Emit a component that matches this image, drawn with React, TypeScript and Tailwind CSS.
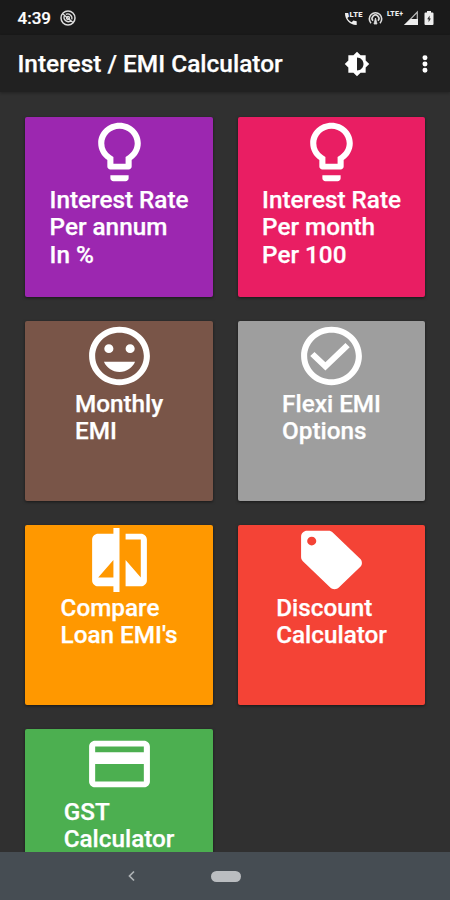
import clsx from "clsx";

interface CardProps {
  lines: string[];
  color: string;
  icon: string;
}

const bulb =
  "M9 21c0 .55.45 1 1 1h4c.55 0 1-.45 1-1v-1H9v1zm3-19C8.14 2 5 5.14 5 9c0 2.38 1.19 4.47 3 5.74V17c0 .55.45 1 1 1h6c.55 0 1-.45 1-1v-2.26c1.81-1.27 3-3.36 3-5.74 0-3.86-3.14-7-7-7zm2.85 11.1l-.85.6V16h-4v-2.3l-.85-.6A4.997 4.997 0 0 1 7 9c0-2.76 2.24-5 5-5s5 2.24 5 5c0 1.63-.8 3.16-2.15 4.1z";
const smile =
  "M11.99 2C6.47 2 2 6.48 2 12s4.47 10 9.99 10C17.52 22 22 17.52 22 12S17.52 2 11.99 2zM12 20c-4.42 0-8-3.58-8-8s3.58-8 8-8 8 3.58 8 8-3.58 8-8 8zm3.5-9c.83 0 1.5-.67 1.5-1.5S16.33 8 15.5 8 14 8.67 14 9.5s.67 1.5 1.5 1.5zm-7 0c.83 0 1.5-.67 1.5-1.5S9.33 8 8.5 8 7 8.67 7 9.5 7.67 11 8.5 11zm3.5 6.5c2.33 0 4.31-1.46 5.11-3.5H6.89c.8 2.04 2.78 3.5 5.11 3.5z";
const check =
  "M16.59 7.58L10 14.17l-3.59-3.58L5 12l5 5 8-8zM12 2C6.48 2 2 6.48 2 12s4.48 10 10 10 10-4.48 10-10S17.52 2 12 2zm0 18c-4.42 0-8-3.58-8-8s3.58-8 8-8 8 3.58 8 8-3.58 8-8 8z";
const compare =
  "M10 3H5c-1.1 0-2 .9-2 2v14c0 1.1.9 2 2 2h5v2h2V1h-2v2zm0 15H5l5-6v6zm9-15h-5v2h5v13l-5-6v9h5c1.1 0 2-.9 2-2V5c0-1.1-.9-2-2-2z";
const tag =
  "M21.41 11.58l-9-9C12.05 2.22 11.55 2 11 2H4c-1.1 0-2 .9-2 2v7c0 .55.22 1.05.59 1.42l9 9c.36.36.86.58 1.41.58.55 0 1.05-.22 1.41-.59l7-7c.37-.36.59-.86.59-1.41 0-.55-.23-1.06-.59-1.42zM5.5 7C4.67 7 4 6.33 4 5.5S4.67 4 5.5 4 7 4.67 7 5.5 6.33 7 5.5 7z";
const creditCard =
  "M20 4H4c-1.11 0-1.99.89-1.99 2L2 18c0 1.11.89 2 2 2h16c1.11 0 2-.89 2-2V6c0-1.11-.89-2-2-2zm0 14H4v-6h16v6zm0-10H4V6h16v2z";
const brightness =
  "M20 15.31L23.31 12 20 8.69V4h-4.69L12 .69 8.69 4H4v4.69L.69 12 4 15.31V20h4.69L12 23.31 15.31 20H20v-4.69zM12 18V6c3.31 0 6 2.69 6 6s-2.69 6-6 6z";

const cards: CardProps[] = [
  { lines: ["Interest Rate", "Per annum", "In %"], color: "bg-[#9c27b0]", icon: bulb },
  { lines: ["Interest Rate", "Per month", "Per 100"], color: "bg-[#e91e63]", icon: bulb },
  { lines: ["Monthly", "EMI"], color: "bg-[#795548]", icon: smile },
  { lines: ["Flexi EMI", "Options"], color: "bg-[#9e9e9e]", icon: check },
  { lines: ["Compare", "Loan EMI's"], color: "bg-[#ff9800]", icon: compare },
  { lines: ["Discount", "Calculator"], color: "bg-[#f44336]", icon: tag },
  { lines: ["GST", "Calculator"], color: "bg-[#4caf50]", icon: creditCard },
];

function Card({ lines, color, icon }: CardProps) {
  return (
    <article
      className={clsx(
        "flex h-[180px] flex-col items-center rounded-[2px] shadow-[0_1px_3px_rgba(0,0,0,0.5)]",
        color
      )}
    >
      <svg
        className="h-[70px] w-[73px] shrink-0"
        viewBox="0 0 24 24"
        preserveAspectRatio="none"
        fill="white"
      >
        <path d={icon} />
      </svg>
      <h2 className="-mt-[0.9px] text-[24.3px] leading-[27.5px] font-medium whitespace-nowrap [-webkit-text-stroke:0.25px_white]">
        {lines.map((line) => (
          <span key={line} className="block">
            {line}
          </span>
        ))}
      </h2>
    </article>
  );
}

function StatusBar() {
  return (
    <header className="flex h-[35px] shrink-0 items-center bg-[#1a1a1a] pt-[2px] pr-[16px] pl-[17.5px]">
      <span className="pt-px text-[17px] font-medium [-webkit-text-stroke:0.2px_white]">4:39</span>
      <svg className="mb-[2px] ml-[9px] h-4 w-4" viewBox="0 0 16 16" fill="none" stroke="#ddd">
        <circle cx="8" cy="8" r="7" strokeWidth="1.5" />
        <path d="M4.5 5.5a4.3 4.3 0 0 0 7 4.8M5.8 4.3a4.3 4.3 0 0 1 6 5M3 4l10 8.5" strokeWidth="1.3" />
        <circle cx="8" cy="8" r="1.5" strokeWidth="1.3" />
      </svg>

      <div className="mb-[2px] ml-auto flex items-center">
        <svg className="h-4 w-[19px]" viewBox="0 0 19 16" fill="#eee">
          <path d="M1 3h3.2l.8 3.4-1.6 1.5c1 2 2.3 3.3 4.3 4.3l1.6-1.7 3.4.8V15C6.5 15.3.8 10 1 3z" />
          <text x="5.5" y="7" fontSize="7.5" fontWeight="900" textLength="13">
            LTE
          </text>
        </svg>
        <svg className="ml-[5px] h-4 w-[15px]" viewBox="0 0 15 16" fill="none" stroke="#ddd" strokeWidth="1.6">
          <path d="M3 13.2a6.2 6.2 0 1 1 9 0M5 10.8a3.4 3.4 0 1 1 5 0" />
          <path d="M6 14l1.5-6L9 14z" fill="#ddd" strokeWidth=".8" />
        </svg>
        <svg className="ml-[3px] h-4 w-[18px]" viewBox="0 0 18 16" fill="#eee">
          <text x="1" y="6" fontSize="7" fontWeight="900" textLength="16">
            LTE+
          </text>
        </svg>
        <svg className="h-4 w-[14px]" viewBox="0 0 14 16" fill="#eee">
          <path d="M13.3 2v12.3H1.5z" fill="none" stroke="#bbb" strokeWidth="1.2" />
          <path d="M14 9v6H0l6.5-6z" />
        </svg>
        <svg className="ml-[6px] h-4 w-[10px]" viewBox="0 0 10 16">
          <path d="M3 1h4v1.5h1.5q1 0 1 1V14q0 1-1 1h-7q-1 0-1-1V3.5q0-1 1-1H3z" fill="#eee" />
          <path d="M5.6 5.5L3.2 9.3h1.4v3L6.9 8.5H5.6z" fill="#333" />
        </svg>
      </div>
    </header>
  );
}

export default function App() {
  return (
    <div className="flex h-[900px] w-[450px] flex-col overflow-hidden bg-[#303030] font-['Roboto',sans-serif] text-white">
      <StatusBar />

      <nav className="z-10 flex h-[57px] shrink-0 items-center bg-[#212121] pl-[17.4px] shadow-[0_1px_3px_rgba(0,0,0,0.3)]">
        <h1 className="pt-px text-[24.45px] font-medium whitespace-nowrap [-webkit-text-stroke:0.25px_white]">
          Interest / EMI Calculator
        </h1>
        <button className="ml-auto" aria-label="Theme">
          <svg className="h-[26px] w-[26px]" viewBox="0 0 24 24" fill="white">
            <path d={brightness} />
          </svg>
        </button>
        <button className="mr-[12px] ml-[42px]" aria-label="More">
          <svg className="h-[26px] w-[26px]" viewBox="0 0 24 24" fill="white">
            <path d="M12 8.5a2.3 2.3 0 1 0 0-4.6 2.3 2.3 0 0 0 0 4.6zm0 1.2a2.3 2.3 0 1 0 0 4.6 2.3 2.3 0 0 0 0-4.6zm0 5.8a2.3 2.3 0 1 0 0 4.6 2.3 2.3 0 0 0 0-4.6z" />
          </svg>
        </button>
      </nav>

      <main className="grid min-h-0 flex-1 grid-cols-2 content-start gap-x-[25px] gap-y-6 overflow-hidden pt-[24.5px] pr-[24.7px] pl-[25.3px]">
        {cards.map((card, i) => (
          <Card key={i} {...card} />
        ))}
      </main>

      <footer className="flex h-[48px] shrink-0 items-center bg-[#464d53]">
        <button className="ml-[127px]" aria-label="Back">
          <svg className="h-[12px] w-[9px]" viewBox="0 0 9 12" fill="none" stroke="#aeb2b5" strokeWidth="1.7">
            <path d="M7 1.5L2.5 6 7 10.5" />
          </svg>
        </button>
        <button className="ml-[75px] h-[11px] w-[30px] rounded-full bg-[#babdc0]" aria-label="Home" />
      </footer>
    </div>
  );
}
